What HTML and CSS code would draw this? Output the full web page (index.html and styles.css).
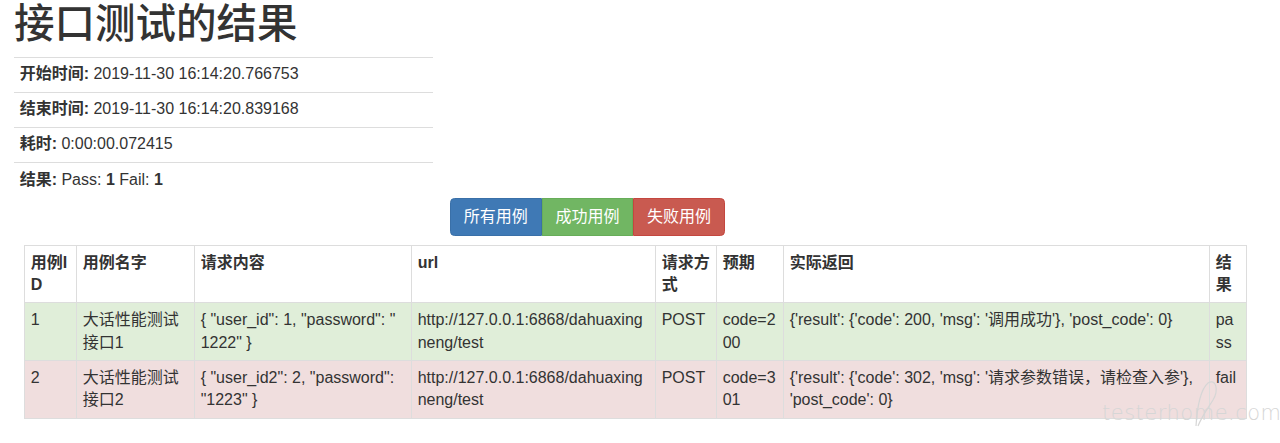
FILE: index.html
```html
<!DOCTYPE html>
<html>
<head>
<meta charset="utf-8">
<title>接口测试的结果</title>
<link rel="stylesheet" href="styles.css">
</head>
<body>
<div class="page">
  <h1 class="title">接口测试的结果</h1>
  <table class="info">
    <tr><td><strong>开始时间:</strong> 2019-11-30 16:14:20.766753</td></tr>
    <tr><td><strong>结束时间:</strong> 2019-11-30 16:14:20.839168</td></tr>
    <tr><td><strong>耗时:</strong> 0:00:00.072415</td></tr>
    <tr><td><strong>结果:</strong> Pass: <strong>1</strong> Fail: <strong>1</strong></td></tr>
  </table>
  <div class="btn-row">
    <div class="btn-group">
      <button class="btn btn-primary">所有用例</button>
      <button class="btn btn-success">成功用例</button>
      <button class="btn btn-danger">失败用例</button>
    </div>
  </div>
  <table class="cases">
    <colgroup>
      <col class="c-id"><col class="c-name"><col class="c-req"><col class="c-url">
      <col class="c-method"><col class="c-exp"><col class="c-actual"><col class="c-res">
    </colgroup>
    <tr>
      <th>用例ID</th><th>用例名字</th><th>请求内容</th><th>url</th>
      <th>请求方式</th><th>预期</th><th>实际返回</th><th>结果</th>
    </tr>
    <tr class="row-pass">
      <td>1</td><td>大话性能测试接口1</td><td class="req">{ "user_id": 1, "password": "<wbr>1222" }</td>
      <td>http://127.0.0.1:6868/dahuaxingneng/test</td><td>POST</td><td>code=200</td>
      <td>{'result': {'code': 200, 'msg': '调用成功'}, 'post_code': 0}</td><td>pass</td>
    </tr>
    <tr class="row-fail">
      <td>2</td><td>大话性能测试接口2</td><td class="req">{ "user_id2": 2, "password": "1223" }</td>
      <td>http://127.0.0.1:6868/dahuaxingneng/test</td><td>POST</td><td>code=301</td>
      <td>{'result': {'code': 302, 'msg': '请求参数错误，请检查入参'}, 'post_code': 0}</td><td>fail</td>
    </tr>
  </table>
</div>
<div class="watermark">
  <svg class="wm-loop" width="40" height="50" viewBox="0 0 40 50"><path d="M10 48 C 11 32, 14 12, 22 5 C 30 0, 33 12, 27 22 C 22 30, 16 38, 12 48" fill="none" stroke="#d6d6d6" stroke-width="1.2"/></svg>
  <span class="wm-text">testerhome.com</span>
</div>
</body>
</html>
```

FILE: styles.css
```css
html, body {
  margin: 0;
  padding: 0;
  background: #fff;
}
body {
  font-family: "Liberation Sans", "Noto Sans CJK SC", sans-serif;
  font-size: 16px;
  line-height: 22.5px;
  color: #333;
}
.page {
  padding: 0;
}
.title {
  margin: 2px 0 10px 14px;
  font-size: 40.5px;
  line-height: 44.5px;
  font-weight: 500;
  color: #333;
}
.info {
  margin-left: 14px;
  width: 419px;
  border-collapse: collapse;
  border-spacing: 0;
}
.info td {
  border-top: 1px solid #ddd;
  padding: 5.8px 5.625px;
  vertical-align: top;
}
.info strong {
  font-weight: bold;
}
.btn-row {
  padding-left: 450px;
  margin-top: 1px;
}
.btn-group {
  display: inline-flex;
}
.btn {
  font-family: inherit;
  font-size: 16px;
  line-height: 22.5px;
  padding: 6.75px 12.8px;
  border: 1px solid transparent;
  color: #fff;
  margin: 0;
  border-radius: 0;
}
.btn:first-child {
  border-radius: 4.5px 0 0 4.5px;
}
.btn:last-child {
  border-radius: 0 4.5px 4.5px 0;
}
.btn-primary {
  background: #3f79b5;
  border-color: #3a70a8;
}
.btn-success {
  background: #71b663;
  border-color: #67ad59;
}
.btn-danger {
  background: #c95a50;
  border-color: #c4473f;
}
.cases {
  margin: 9px 0 0 24px;
  width: 1222px;
  table-layout: fixed;
  border-collapse: collapse;
  border-spacing: 0;
  border: 1px solid #ddd;
}
.c-id { width: 52px; }
.c-name { width: 118px; }
.c-req { width: 217px; }
.c-url { width: 244px; }
.c-method { width: 61px; }
.c-exp { width: 67px; }
.c-actual { width: 426px; }
.c-res { width: 37px; }
.cases th,
.cases td {
  border: 1px solid #ddd;
  padding: 5.8px 5.625px;
  vertical-align: top;
  text-align: left;
  word-break: break-all;
}
.cases td.req {
  padding-right: 7.5px;
}
.cases th {
  font-weight: bold;
}
.row-pass td {
  background: #e0eed9;
}
.row-fail td {
  background: #f0dede;
}
.watermark {
  position: absolute;
  left: 1100px;
  top: 378px;
  width: 178px;
  height: 60px;
  pointer-events: none;
}
.wm-loop {
  position: absolute;
  left: 86px;
  top: 0;
}
.wm-text {
  position: absolute;
  left: 2px;
  top: 24px;
  font-family: "DejaVu Sans", sans-serif;
  font-weight: 200;
  font-size: 21px;
  letter-spacing: 0.5px;
  color: #d6d6d6;
}
```
